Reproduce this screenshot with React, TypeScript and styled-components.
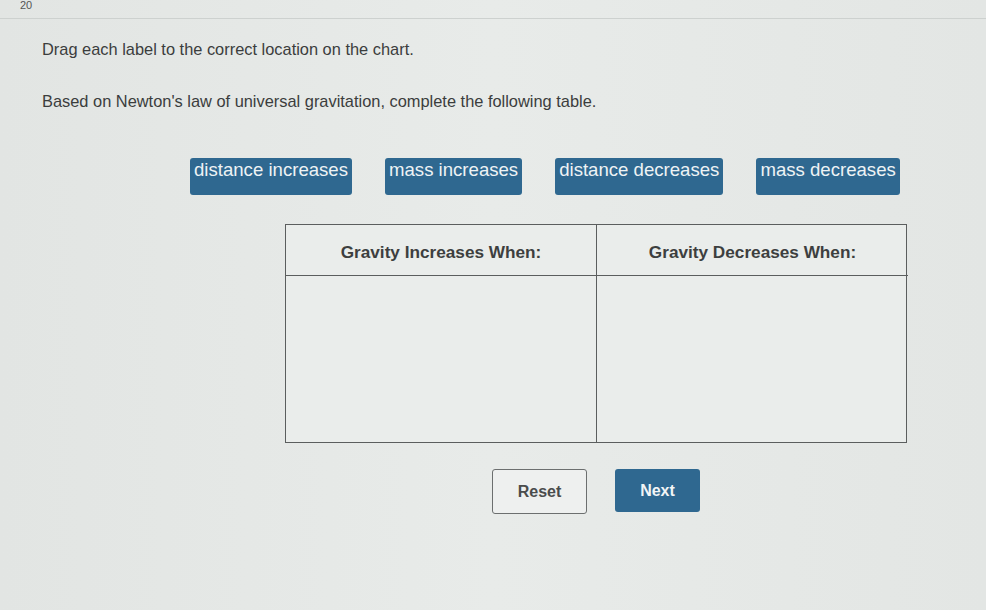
import { styled, createGlobalStyle } from "styled-components";

const GlobalStyle = createGlobalStyle`
  html, body {
    margin: 0;
    padding: 0;
    background: #e5e8e6;
  }
  body {
    font-family: "Liberation Sans", Arial, sans-serif;
    color: #3a3c3c;
  }
`;

const Page = styled.div`
  width: 986px;
  height: 610px;
  overflow: hidden;
  background: linear-gradient(90deg, #e2e5e3 0%, #e8ebe9 50%, #e3e6e4 100%);
`;

const TopBar = styled.div`
  height: 18px;
  padding-left: 20px;
  border-bottom: 1px solid #cdd1cf;
  overflow: hidden;
`;

const QuestionNumber = styled.div`
  font-size: 11px;
  line-height: 11px;
  color: #555;
`;

const Content = styled.div`
  padding: 21px 0 0 42px;
`;

const Prompt = styled.p<{ $gap: number }>`
  margin: 0 0 ${(p) => p.$gap}px;
  font-size: 16.4px;
  line-height: 19px;
  color: #3b3d3d;
`;

const LabelRow = styled.div`
  display: flex;
  gap: 33px;
  margin-left: 148px;
  align-items: flex-start;
`;

const DragLabel = styled.div`
  height: 37px;
  padding: 1px 4px 0;
  box-sizing: border-box;
  background: #2f6890;
  border-radius: 3px;
  color: #eef3f5;
  font-size: 18.6px;
  line-height: 22px;
  white-space: nowrap;
`;

const Table = styled.div`
  margin: 29px 0 0 243px;
  width: 622px;
  display: grid;
  grid-template-columns: 311px 311px;
  grid-template-rows: 51px 166px;
  border: 1.5px solid #5b5e5e;
  box-sizing: border-box;
  background: #eaedeb;
`;

const HeaderCell = styled.div<{ $last?: boolean }>`
  display: flex;
  align-items: center;
  justify-content: center;
  padding-top: 4px;
  font-weight: bold;
  font-size: 17.2px;
  color: #3d3f3f;
  border-bottom: 1.5px solid #5b5e5e;
  border-right: ${(p) => (p.$last ? "none" : "1.5px solid #5b5e5e")};
`;

const BodyCell = styled.div<{ $last?: boolean }>`
  border-right: ${(p) => (p.$last ? "none" : "1.5px solid #5b5e5e")};
`;

const ButtonRow = styled.div`
  margin: 26px 0 0 243px;
  width: 622px;
  display: flex;
  justify-content: center;
  gap: 28px;
`;

const Button = styled.button<{ $primary?: boolean }>`
  width: ${(p) => (p.$primary ? "85px" : "95px")};
  height: ${(p) => (p.$primary ? "43px" : "45px")};
  border-radius: 3px;
  border: ${(p) => (p.$primary ? "none" : "1.5px solid #6c6f6f")};
  background: ${(p) => (p.$primary ? "#2f6890" : "#eef0ef")};
  color: ${(p) => (p.$primary ? "#f2f5f6" : "#4a4c4c")};
  font-family: "Liberation Sans", Arial, sans-serif;
  font-weight: bold;
  font-size: 16px;
  padding: 0;
`;

const labels = ["distance increases", "mass increases", "distance decreases", "mass decreases"];

export default function App() {
  return (
    <Page>
      <GlobalStyle />
      <TopBar>
        <QuestionNumber>20</QuestionNumber>
      </TopBar>
      <Content>
        <Prompt $gap={33}>Drag each label to the correct location on the chart.</Prompt>
        <Prompt $gap={47}>Based on Newton's law of universal gravitation, complete the following table.</Prompt>
        <LabelRow>
          {labels.map((l) => (
            <DragLabel key={l}>{l}</DragLabel>
          ))}
        </LabelRow>
        <Table>
          <HeaderCell>Gravity Increases When:</HeaderCell>
          <HeaderCell $last>Gravity Decreases When:</HeaderCell>
          <BodyCell />
          <BodyCell $last />
        </Table>
        <ButtonRow>
          <Button>Reset</Button>
          <Button $primary>Next</Button>
        </ButtonRow>
      </Content>
    </Page>
  );
}
